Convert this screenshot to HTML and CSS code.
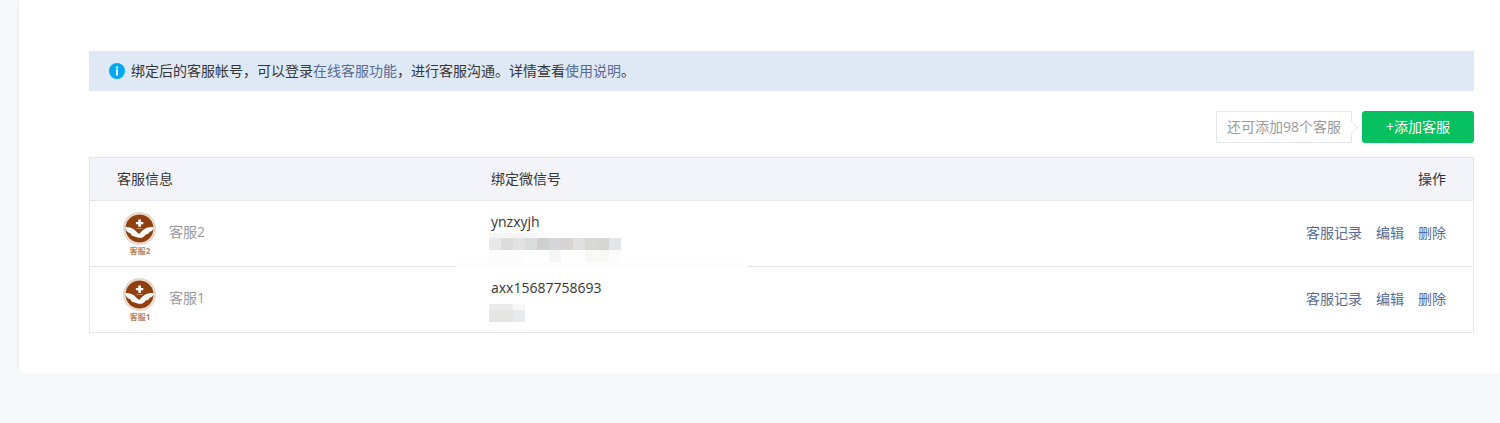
FILE: index.html
```
<!DOCTYPE html>
<html lang="zh-CN">
<head>
    <meta charset="UTF-8">
    <title>客服管理</title>
    <link rel="stylesheet" href="styles.css">
</head>

<body>
    <!-- shared logo, used by both avatars -->
    <svg class="defs" width="0" height="0" aria-hidden="true">
        <symbol id="logo" viewBox="0 0 46 36">
            <circle cx="22.5" cy="17.5" r="16.5" fill="#f3e9e2"/>
            <circle cx="22.5" cy="17.5" r="15.6" fill="none" stroke="#dcc7b9" stroke-width="1.4" stroke-dasharray="1 .6"/>
            <circle cx="22.5" cy="17.5" r="14" fill="#8f400e"/>
            <path d="M21.3 8.5h2.6v2.4h2.4v2.4h-2.4v2.4h-2.6v-2.4h-2.4v-2.4h2.4z" fill="#fff"/>
            <path d="M19.5 17h6v1h-6z" fill="#b98b6c"/>
            <path d="M8 16C13 16 16.5 17.4 19 20.2L22 23L25.5 19.6C28.5 16.6 32 15.6 37 16C36.6 19 35 20.4 32.6 20.8C32 22.6 30.6 23.4 28.6 23.4C27 26.4 24 27.6 20.5 26.4L17 25.2C15 24.8 14 23.8 13.6 22.4C10.5 21.8 8.6 19.4 8 16z" fill="#fff"/>
        </symbol>
    </svg>

    <div class="panel">
        <div class="notice">
            <svg class="info" viewBox="0 0 16 16" aria-hidden="true">
                <circle cx="8" cy="8" r="8" fill="#00aaf2"/>
                <path d="M7 3.5h2v2H7zM7 6.5h2v6H7z" fill="#fff"/>
            </svg>
            <p>绑定后的客服帐号，可以登录<a href="#">在线客服功能</a>，进行客服沟通。详情查看<a href="#">使用说明</a>。</p>
        </div>

        <div class="toolbar">
            <span class="tip">还可添加98个客服</span>
            <button type="button" class="add">+添加客服</button>
        </div>

        <table>
            <thead>
                <tr>
                    <th class="col-info">客服信息</th>
                    <th>绑定微信号</th>
                    <th class="col-action">操作</th>
                </tr>
            </thead>
            <tbody>
                <tr>
                    <td>
                        <div class="staff">
                            <svg class="avatar" viewBox="0 0 46 46" role="img">
                                <use href="#logo" width="46" height="36"/>
                                <text x="23" y="43">客服2</text>
                            </svg>
                            <span class="name">客服2</span>
                        </div>
                    </td>
                    <td class="account">
                        <div>ynzxyjh</div>
                        <svg class="mosaic" viewBox="0 0 132 30" aria-hidden="true">
                            <path d="M0 1h48v5H0z" fill="#f5f5f5"/>
                            <path d="M48 3h12v3H48z" fill="#fcfcfc"/>
                            <path d="M0 6h12v12H0z" fill="#eae8e7"/>
                            <path d="M12 6h12v12H12z" fill="#d9dcdb"/>
                            <path d="M24 6h12v12H24z" fill="#e2e2e2"/>
                            <path d="M36 6h12v12H36z" fill="#dadbdc"/>
                            <path d="M48 6h12v12H48z" fill="#d0d0ce"/>
                            <path d="M60 6h12v12H60z" fill="#d6d7da"/>
                            <path d="M72 6h12v12H72z" fill="#d7d5d3"/>
                            <path d="M84 6h12v12H84z" fill="#e0e0e0"/>
                            <path d="M96 6h12v12H96z" fill="#d8d8d6"/>
                            <path d="M108 6h12v12h-12z" fill="#d6d6d7"/>
                            <path d="M120 6h12v12h-12z" fill="#e4e5e8"/>
                            <path d="M0 18h36v12H0zM120 18h12v12h-12z" fill="#fcfcfc"/>
                            <path d="M60 18h12v12H60z" fill="#f6f6f6"/>
                            <path d="M96 18h24v12H96z" fill="#f8f8f7"/>
                        </svg>
                    </td>
                    <td class="actions"><a href="#">客服记录</a><a href="#">编辑</a><a href="#">删除</a></td>
                </tr>
                <tr>
                    <td>
                        <div class="staff">
                            <svg class="avatar" viewBox="0 0 46 46" role="img">
                                <use href="#logo" width="46" height="36"/>
                                <text x="23" y="43">客服1</text>
                            </svg>
                            <span class="name">客服1</span>
                        </div>
                    </td>
                    <td class="account">
                        <div>axx15687758693</div>
                        <svg class="mosaic" viewBox="0 0 132 30" aria-hidden="true">
                            <path d="M0 6h24v6H0z" fill="#ebebeb"/>
                            <path d="M24 6h12v6H24z" fill="#f6f6f6"/>
                            <path d="M0 12h24v12H0z" fill="#e5e5e4"/>
                            <path d="M24 12h12v12H24z" fill="#e9eaed"/>
                        </svg>
                    </td>
                    <td class="actions"><a href="#">客服记录</a><a href="#">编辑</a><a href="#">删除</a></td>
                </tr>
            </tbody>
        </table>
    </div>
</body>
</html>
```
FILE: styles.css
```
* {
    box-sizing: border-box;
}
body {
    margin: 0;
    background-color: #f6f8f9;
    color: #353535;
    font-family: "Open Sans", "Noto Sans CJK SC", sans-serif;
    font-size: 14px;
    line-height: 20px;
}
a {
    color: #576b95;
    text-decoration: none;
}
.defs {
    position: absolute;
}
.panel {
    margin-left: 19px;
    padding: 51px 26px 40px 70px;
    background-color: #fff;
    border-radius: 0 0 0 4px;
    box-shadow: 0 1px 6px rgba(0, 0, 0, 0.06);
}

/* blue notice bar */
.notice {
    display: flex;
    align-items: center;
    gap: 6px;
    height: 40px;
    padding: 0 20px;
    background-color: #dfe9f5;
}
.notice p {
    margin: 0;
}
.info {
    width: 16px;
    height: 16px;
}

.toolbar {
    display: flex;
    justify-content: flex-end;
    gap: 10px;
    margin: 20px 0 14px;
}
.tip {
    position: relative;
    height: 32px;
    padding: 0 10px;
    border: 1px solid #e4e6e9;
    color: #9a9a9a;
    line-height: 30px;
}
/* arrow that points to the button */
.tip::after {
    content: "";
    position: absolute;
    top: 11px;
    right: -5px;
    width: 8px;
    height: 8px;
    border: solid #e8eaed;
    border-width: 1px 1px 0 0;
    background-color: #fff;
    transform: rotate(45deg);
}
.add {
    width: 112px;
    height: 32px;
    padding: 0;
    border: 0;
    border-radius: 3px;
    background-color: #07c160;
    color: #fff;
    font: inherit;
}

table {
    width: 100%;
    border: 1px solid #e4e6eb;
    border-spacing: 0;
    table-layout: fixed;
}
th {
    height: 42px;
    padding: 0 27px;
    background-color: #f3f4f9;
    font-weight: normal;
    text-align: left;
}
.col-info {
    width: 374px;
}
.col-action {
    width: 240px;
    text-align: right;
}
td {
    height: 66px;
    padding: 0 27px;
    border-top: 1px solid #e4e6eb;
}
.staff {
    display: flex;
    align-items: center;
    gap: 6px;
    color: #9a9a9a;
}
.name {
    padding-bottom: 4px;
}
.avatar {
    width: 46px;
    height: 46px;
}
.avatar text {
    fill: #b58363;
    font-size: 8px;
    font-weight: bold;
    text-anchor: middle;
}
.account {
    position: relative;
    padding-top: 6px;
}
.mosaic {
    display: block;
    width: 132px;
    height: 30px;
    margin-left: -2px;
}
/* the smudge runs over the line between the two rows */
tr:first-child .account::after {
    content: "";
    position: absolute;
    z-index: 1;
    left: -8px;
    bottom: -2px;
    width: 292px;
    height: 6px;
    background-color: #fdfdfd;
}
.actions {
    padding-bottom: 2px;
    text-align: right;
}
.actions a {
    margin-left: 14px;
}
```
